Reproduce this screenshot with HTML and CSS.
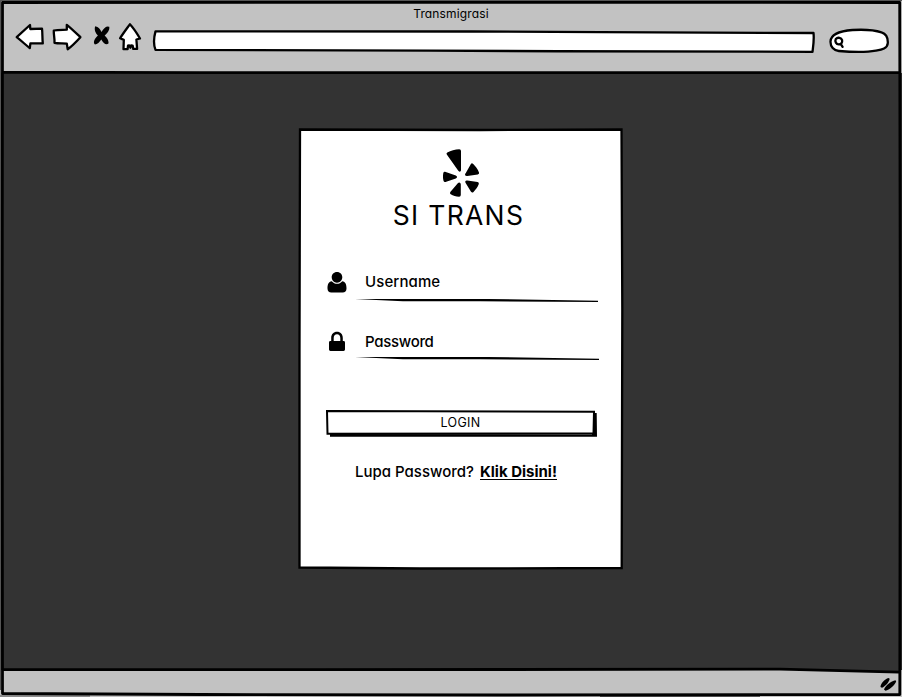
FILE: index.html
```
<!DOCTYPE html>
<html lang="id">
<head>
<meta charset="utf-8">
<title>Transmigrasi</title>
<link rel="stylesheet" href="styles.css">
</head>
<body>
<div class="window">
  <header class="chrome">
    <div class="title">Transmigrasi</div>
    <div class="toolbar">
      <svg class="tool back" viewBox="14 20 34 34"><path d="M16.7 37.2 30 25l.3 4 11.7-.3c.6 4.500.2 9 .8 14.600l-12.400.1-.6 4.700C25.600 44.800 21 40.500 16.700 37.200Z"/></svg>
      <svg class="tool forward" viewBox="48 20 40 34"><path d="M53.800 30.500c4-.9 8.500-.6 13-.8V24.800C71.500 28.500 76.500 33.500 80.400 37.200 76.500 41.500 72.300 46 67.700 49.200l-.9-5.600c-4.300-.5-8 .2-12.300-.7.300-4-.9-8-.7-12.400Z"/></svg>
      <svg class="tool stop" viewBox="88 20 26 34"><path class="ink" d="M95.200 26.300c3.300.4 5 2.900 6.300 5.600 1.700-2.700 3.500-4.900 5.500-5.500l2.300.4c.5 3.900-2.100 6.400-4.700 8.800 2.500 2.200 4 4.800 4 7.600-1.800 2.300-5 .9-7.300-3.600-1.700 2.600-4 4.800-6.300 4.800-2.300-1.400-.6-5.700 2.900-8.800-2.500-2.400-3.900-6.300-2.700-9.300Z"/></svg>
      <svg class="tool home" viewBox="114 20 34 34"><path d="M129.900 24.300C133.500 28 137 33.500 140 38.500l-3.600 1 .7 9.300-3.800.1-.7-3.300-1.500-.1-.7 2.200-1.200-2.400-1.200.3-.4 3.500-4.100.1.300-9.300-3.700-1.600C123 33.500 126.500 29 129.900 24.300Z"/></svg>
      <svg class="tool address" viewBox="148 20 672 34"><path d="M155.500 31.400C290 30.700 450 31.200 600 32.200L813.500 33c.8 6.500-.2 12.500-1 18.800C650 52.300 560 51 430 50.600L155.500 49.900c-2-5-1.500-13 0-18.500Z"/></svg>
      <svg class="tool search" viewBox="820 20 82 34"><path d="M830.500 41.500c.3-7 9-10.500 22-11.500 11-.6 22 0 29 2.300 5 1.500 6.500 6 6.300 10.700-.2 5.500-6 6.500-12 7.600-10 2-24 1.500-37 .4-5-.3-8.500-4.500-8.300-9.500Z"/><path d="M835.800 39c2-2.200 5.500-1.200 6.300 1.200.5 2.600-1.100 4.300-3.300 4.200-2.600-.2-4.200-2.900-3-5.400Zm5 5.100 1.800 2.800"/></svg>
    </div>
  </header>

  <main class="page">
    <section class="card">
      <div class="brand">
        <svg class="logo" viewBox="442 148 40 50"><path class="ink" d="M447.300 152.500c3.500-2 7.700-3.200 12-3.300q1.700 0 1.700 1.700V170c0 2-2 2.300-2.900.6l-11.300-16.100q-.8-1.300.5-2ZM473 163.700c2.500 2.500 4.800 5.500 6 8.700q.5 1.600-1.200 2.100l-10.500 1.500c-2.300.2-3-1.300-1.500-2.900l5.100-9.100q.8-1.300 2.100-.3ZM445 171.700l10.800 3.700q2.500 1.400 0 3.200L445.500 182q-1.600.4-2-1.300c-.7-2.500-.6-5.200-.2-7.700q.4-1.500 1.700-1.300ZM467.300 180.500l10.300 1.600q1.700.6 1.200 2c-1.100 3-3 5.600-5.300 7.900q-1.300 1.100-2.500-.2l-5.200-8.600c-1.100-1.800-.4-3 1.500-2.700ZM460.800 184.500V195q-.1 1.800-1.800 1.700c-3-.1-6-1-8.300-2.500q-1.300-.9-.4-2.300l7.500-8.700c1.300-1.300 2.900-.7 3 1.300Z"/></svg>
        <h1>SI TRANS</h1>
      </div>
      <div class="field">
        <svg class="icon" viewBox="326 270 22 24"><path class="ink" d="M337 272c3.200 0 5.300 2.400 5.300 5.300s-2.200 5.400-5.300 5.400-5.300-2.500-5.300-5.400S333.800 272 337 272ZM331.700 281.300c3 3.400 7.700 3.400 10.600 0 3.200.4 4.200 3.400 4.200 7.200 0 2.500-1.500 4-3.800 4H331.300c-2.300 0-3.800-1.500-3.800-4 0-3.800 1-6.800 4.200-7.200Z"/></svg>
        <span class="label user-label">Username</span>
        <svg class="rule" viewBox="355 298 244 5"><path class="ink" d="M355 299 487 299 598 300.700V302L480 301.300 403 301.200Z"/></svg>
      </div>
      <div class="field">
        <svg class="icon" viewBox="326 330 22 24"><path class="ink" fill-rule="evenodd" d="M331.200 341v-3c0-3.800 2.400-6.200 5.800-6.200s5.800 2.400 5.800 6.200v3h.8q1.400 0 1.400 1.400v7.200q0 1.400-1.400 1.400h-13.200q-1.400 0-1.400-1.400v-7.200q0-1.400 1.400-1.400Zm2.500 0h6.600v-3c0-2.300-1.300-3.700-3.300-3.700s-3.300 1.400-3.300 3.700Z"/></svg>
        <span class="label pass-label">Password</span>
        <svg class="rule" viewBox="355 356 244 5"><path class="ink" d="M355 357 487 357 599 358.700V360L480 359.300 403 359.200Z"/></svg>
      </div>
      <button class="login" type="button">
        <svg class="sketch" viewBox="325 409 274 29"><path class="ink" d="M330 434 592 434.500 593.500 413 596.700 413 597 436.800 330 436.800Z"/><path class="paper" d="M327 411 594 411.800 593.500 433.500 327.500 433.700Z"/></svg>
        <span>LOGIN</span>
      </button>
      <p class="help"><span class="ask">Lupa Password?</span><a href="#">Klik Disini!</a></p>
      <svg class="card-edge" viewBox="298 127 327 443"><path d="M300 129.500 480 130 621.500 129.500 622.300 310 621.700 568 420 568.500 299.500 567.500 299.500 350Z"/></svg>
    </section>
  </main>

  <footer class="status">
    <svg class="grip" viewBox="878 675 20 18"><path class="ink" d="M880.500 687c0-3 4-8 8-9l1.200.8c-.7 3.700-4.600 7.800-7.700 9ZM884 689.500c1.500-4 7-8.500 11.500-9.300l.7 1.200c-1.700 4-6.700 8.200-10.700 9.300Z"/></svg>
  </footer>
  <svg class="frame" viewBox="0 0 902 697">
    <path class="halo" d="M0 .5H902M0 696H90M600 696.500H760M.5 0V690"/>
    <path class="slope" d="M780 669 899 672V668H780Z"/>
    <path class="line" d="M2.500 2.500 450 2.300 899.700 2.500 900.300 350 899.800 694.500 500 695 200 694.500 2.500 693.500 2.200 350ZM3 72.200 200 72.700 900 72.500M3 669.500 300 669.700 780 669.200 899 672.200"/>
  </svg>
</div>
</body>
</html>
```

FILE: styles.css
```
* { box-sizing: border-box; }

body {
  margin: 0;
  font-family: Inter, "Liberation Sans", sans-serif;
  font-feature-settings: "cv11", "ss03";
  color: #000;
}

svg { display: block; }

.window {
  position: relative;
  display: grid;
  grid-template-rows: 73px 597px 27px;
  width: 902px;
  height: 697px;
  overflow: hidden;
  background: #c2c2c2;
}

.title {
  height: 20px;
  padding-top: 6px;
  font-size: 12px;
  line-height: 16px;
  letter-spacing: 0.15px;
  text-align: center;
}

.toolbar {
  display: flex;
  height: 34px;
  padding-left: 14px;
}

.tool {
  flex: none;
  height: 34px;
  fill: #fff;
  stroke: #000;
  stroke-width: 2.3;
  stroke-linejoin: round;
  stroke-linecap: round;
}

.back, .home { width: 34px; }
.forward { width: 40px; }
.stop { width: 26px; }
.address { width: 672px; }
.search { width: 82px; }

.ink { fill: #000; stroke: none; }

.page {
  display: flex;
  justify-content: center;
  align-items: flex-start;
  padding: 56px 0 0 20px;
  background: #333;
}

.card {
  position: relative;
  display: flex;
  flex-direction: column;
  width: 322px;
  height: 439px;
  padding: 19px 24px 0 26px;
  background: #fff;
}

.brand {
  display: flex;
  flex-direction: column;
  align-items: center;
  height: 122px;
  padding-right: 6px;
}

.logo { width: 40px; height: 50px; margin-left: 6px; }

h1 {
  margin: 1px 0 0 -1px;
  font-size: 26.5px;
  line-height: 32px;
  font-weight: 400;
  letter-spacing: 1.300px;
  white-space: nowrap;
}

.field {
  display: grid;
  grid-template-columns: 29px 244px;
  grid-template-rows: 28px 5px;
  height: 60px;
}

.field + .field { grid-template-rows: 26px 5px; }

.icon { width: 22px; height: 24px; }

.label {
  padding-left: 10px;
  font-size: 15px;
  font-weight: 450;
  line-height: 24px;
}

.user-label { letter-spacing: 0.1px; }
.pass-label { letter-spacing: -0.3px; }

.rule { grid-column: 2; width: 244px; height: 5px; }

.login {
  position: relative;
  width: 274px;
  height: 29px;
  margin: 19px 0 0 -1px;
  padding: 0 3px 1px 0;
  border: 0;
  background: none;
  color: #000;
  font: inherit;
  font-size: 12.500px;
  line-height: 20px;
  letter-spacing: 0.3px;
}

.login span { position: relative; }

.sketch { position: absolute; inset: 0; width: 274px; height: 29px; }

.paper { fill: #fff; stroke: #000; stroke-width: 2; }

.help {
  display: flex;
  margin: 22px 0 0 29px;
  font-size: 15px;
  font-weight: 450;
  line-height: 23px;
  white-space: nowrap;
}

.ask { width: 125px; }

.help a {
  color: #000;
  font-weight: 700;
  text-decoration: underline;
  text-decoration-thickness: 1px;
  text-underline-offset: 2px;
  text-decoration-skip-ink: none;
}

.card-edge {
  position: absolute;
  left: -2px;
  top: -2px;
  width: 327px;
  height: 443px;
  fill: none;
  stroke: #000;
  stroke-width: 2.300;
  pointer-events: none;
}

.status {
  display: flex;
  justify-content: flex-end;
  padding: 5px 4px 0 0;
}

.grip { width: 20px; height: 18px; }

.frame {
  position: absolute;
  inset: 0;
  width: 902px;
  height: 697px;
  pointer-events: none;
}

.line { fill: none; stroke: #000; stroke-width: 2.800; stroke-linejoin: round; }
.halo { fill: none; stroke: #555; stroke-width: 1; }
.slope { fill: #333; }
```
